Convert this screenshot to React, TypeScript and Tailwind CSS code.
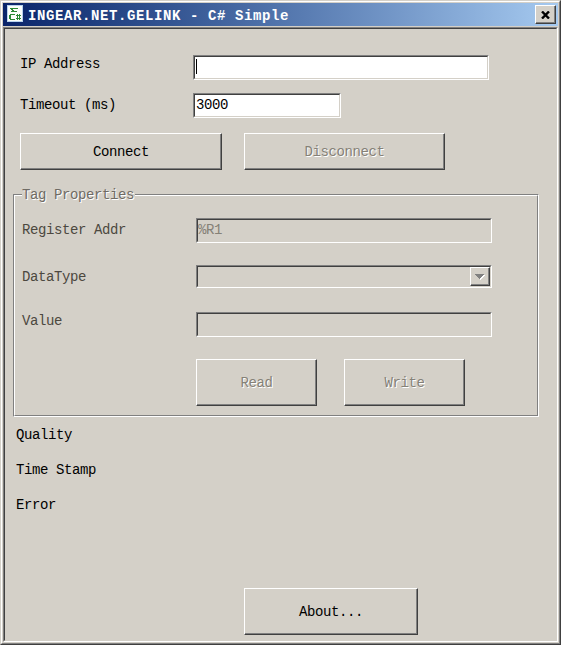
import { useState } from "react";
import type { ReactNode } from "react";

const RaisedButton = ({
  className,
  disabled,
  children,
}: {
  className: string;
  disabled?: boolean;
  children: ReactNode;
}) => (
  <button
    disabled={disabled}
    className={`flex items-center justify-center border border-t-white border-l-white border-r-[#404040] border-b-[#404040] bg-[#d4d0c8] shadow-[inset_-1px_-1px_0_#808080] ${
      disabled ? "text-[#858177] [text-shadow:1px_1px_0_#fff]" : "text-black"
    } ${className}`}
  >
    {children}
  </button>
);

const Sunken = ({ className, children }: { className: string; children?: ReactNode }) => (
  <div className={`border border-t-[#808080] border-l-[#808080] border-r-white border-b-white ${className}`}>
    <div className="flex h-full w-full border border-t-[#404040] border-l-[#404040] border-r-[#d4d0c8] border-b-[#d4d0c8]">
      {children}
    </div>
  </div>
);

const AppIcon = () => (
  <svg width="16" height="17" viewBox="0 0 16 17" shapeRendering="crispEdges">
    <rect width="16" height="17" fill="#b9d3ee" />
    <rect x="1" y="1" width="14" height="15" fill="#fbfffb" />
    <g fill="#2a8a35">
      <rect x="3" y="3" width="8" height="1" />
      <rect x="4" y="4" width="2" height="1" />
      <rect x="5" y="5" width="2" height="1" />
      <rect x="4" y="6" width="6" height="1" />
      <rect x="3" y="9" width="5" height="1" />
      <rect x="2" y="10" width="2" height="4" />
      <rect x="3" y="14" width="5" height="1" />
      <rect x="10" y="9" width="1" height="6" />
      <rect x="12" y="9" width="1" height="6" />
      <rect x="9" y="10" width="5" height="1" />
      <rect x="9" y="13" width="5" height="1" />
    </g>
  </svg>
);

const CloseIcon = () => (
  <svg width="9" height="8" viewBox="0 0 9 8">
    <path d="M1 .5l7 7M8 .5l-7 7" stroke="#000" strokeWidth="2.4" />
  </svg>
);

const ArrowIcon = () => (
  <svg className="mr-px" width="11" height="7" viewBox="0 0 11 7" shapeRendering="crispEdges">
    <path d="M1 1h9v1h-1v1h-1v1h-1v1h-1v1h-1v-1h-1v-1h-1v-1h-1v-1h-1z" transform="translate(1 1)" fill="#fff" />
    <path d="M1 1h9v1h-1v1h-1v1h-1v1h-1v1h-1v-1h-1v-1h-1v-1h-1v-1h-1z" fill="#808080" />
  </svg>
);

const status = ["Quality", "Time Stamp", "Error"];

export default function App() {
  const [address, setAddress] = useState("");
  const [timeout, setTimeoutMs] = useState("3000");

  return (
    <div className="h-[645px] w-[561px] border border-t-[#d4d0c8] border-l-[#d4d0c8] border-r-[#404040] border-b-[#404040] bg-[#d4d0c8] font-['Liberation_Mono',monospace] text-[14px] leading-4 tracking-[-0.4px] text-black">
      <div className="flex h-full w-full flex-col border border-t-white border-l-white border-r-[#808080] border-b-[#808080] p-px">
        <header className="flex h-[23px] shrink-0 items-start bg-linear-to-r from-[#0a246a] to-[#a6caf0] pt-0.5 pr-0.5 pl-1">
          <AppIcon />
          <h1 className="mt-[3px] ml-[5px] flex-1 text-[14px] font-bold tracking-[0.6px] whitespace-pre text-white">
            INGEAR.NET.GELINK - C# Simple
          </h1>
          <RaisedButton className="h-[19px] w-[21px]">
            <CloseIcon />
          </RaisedButton>
        </header>

        <Sunken className="mt-px min-h-0 flex-1">
          <main className="flex w-full flex-col">
            <div className="ml-[15px] flex pt-[26px]">
              <label className="w-[173px] pt-px">IP Address</label>
              <Sunken className="h-[25px] w-[296px] bg-white">
                <span className="mt-0.5 ml-px h-[15px] w-px bg-black" />
                <input
                  className="w-full caret-transparent outline-none"
                  value={address}
                  onChange={(e) => setAddress(e.target.value)}
                />
              </Sunken>
            </div>
            <div className="mt-[13px] ml-[15px] flex">
              <label className="w-[173px] pt-1">Timeout (ms)</label>
              <Sunken className="h-[25px] w-[148px] bg-white">
                <input
                  className="mt-px h-[18px] w-full pl-px tracking-[-0.4px] outline-none"
                  value={timeout}
                  onChange={(e) => setTimeoutMs(e.target.value)}
                />
              </Sunken>
            </div>
            <div className="mt-[15px] ml-[15px] flex gap-[22px]">
              <RaisedButton className="h-[37px] w-[202px]">Connect</RaisedButton>
              <RaisedButton className="h-[37px] w-[201px]" disabled>
                Disconnect
              </RaisedButton>
            </div>

            <section className="mt-6 ml-2 h-[223px] w-[526px] border border-[#808080] border-r-white border-b-white">
              <div className="h-full w-full border border-t-white border-l-white border-r-[#808080] border-b-[#808080] pl-[7px] text-[#4c4840]">
                <div className="-mt-[9px] w-[113px] bg-[#d4d0c8] text-[#6f6b64] [text-shadow:1px_1px_0_#fff]">
                  Tag Properties
                </div>
                <div className="mt-[15px] flex">
                  <span className="w-[174px] pt-1">Register Addr</span>
                  <Sunken className="h-[25px] w-[296px]">
                    <span className="pt-0.5 text-[#858177]">%R1</span>
                  </Sunken>
                </div>
                <div className="mt-[22px] flex">
                  <span className="w-[174px] pt-1">DataType</span>
                  <Sunken className="h-[23px] w-[296px]">
                    <RaisedButton className="ml-auto h-[19px] w-5" disabled>
                      <ArrowIcon />
                    </RaisedButton>
                  </Sunken>
                </div>
                <div className="mt-6 flex">
                  <span className="w-[174px] pt-px">Value</span>
                  <Sunken className="h-[25px] w-[296px]" />
                </div>
                <div className="mt-[22px] ml-[174px] flex gap-[27px]">
                  <RaisedButton className="h-[47px] w-[121px]" disabled>
                    Read
                  </RaisedButton>
                  <RaisedButton className="h-[47px] w-[121px]" disabled>
                    Write
                  </RaisedButton>
                </div>
              </div>
            </section>

            <div className="mt-2.5 ml-[11px] flex flex-col gap-[19px]">
              {status.map((label) => (
                <span key={label}>{label}</span>
              ))}
            </div>
            <RaisedButton className="mt-[75px] ml-[239px] h-[47px] w-[174px]">About...</RaisedButton>
          </main>
        </Sunken>
      </div>
    </div>
  );
}
